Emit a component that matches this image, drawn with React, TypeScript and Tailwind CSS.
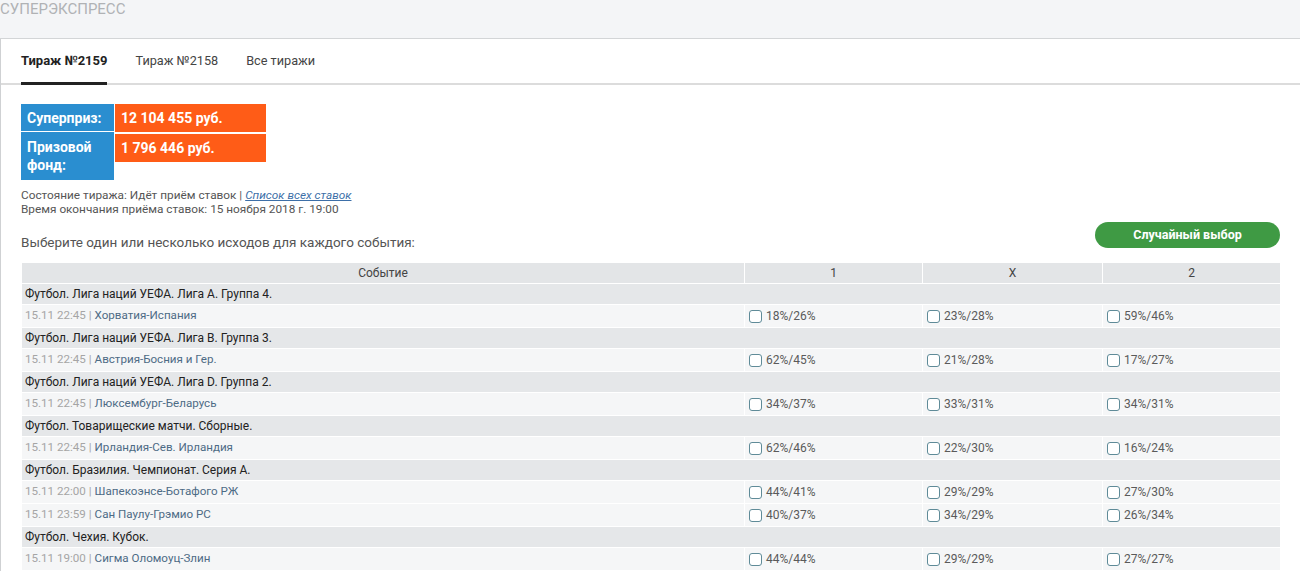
import React from "react";

type Event = { time: string; name: string; odds: [string, string, string] };
type Group = { title: string; events: Event[] };

const groups: Group[] = [
  {
    title: "Футбол. Лига наций УЕФА. Лига А. Группа 4.",
    events: [{ time: "15.11 22:45", name: "Хорватия-Испания", odds: ["18%/26%", "23%/28%", "59%/46%"] }],
  },
  {
    title: "Футбол. Лига наций УЕФА. Лига B. Группа 3.",
    events: [{ time: "15.11 22:45", name: "Австрия-Босния и Гер.", odds: ["62%/45%", "21%/28%", "17%/27%"] }],
  },
  {
    title: "Футбол. Лига наций УЕФА. Лига D. Группа 2.",
    events: [{ time: "15.11 22:45", name: "Люксембург-Беларусь", odds: ["34%/37%", "33%/31%", "34%/31%"] }],
  },
  {
    title: "Футбол. Товарищеские матчи. Сборные.",
    events: [{ time: "15.11 22:45", name: "Ирландия-Сев. Ирландия", odds: ["62%/46%", "22%/30%", "16%/24%"] }],
  },
  {
    title: "Футбол. Бразилия. Чемпионат. Серия А.",
    events: [
      { time: "15.11 22:00", name: "Шапекоэнсе-Ботафого РЖ", odds: ["44%/41%", "29%/29%", "27%/30%"] },
      { time: "15.11 23:59", name: "Сан Паулу-Грэмио РС", odds: ["40%/37%", "34%/29%", "26%/34%"] },
    ],
  },
  {
    title: "Футбол. Чехия. Кубок.",
    events: [{ time: "15.11 19:00", name: "Сигма Оломоуц-Злин", odds: ["44%/44%", "29%/29%", "27%/27%"] }],
  },
];

const cols = "grid grid-cols-[722px_178px_180px_1fr]";

function OddCell({ value }: { value: string }) {
  return (
    <div className="flex items-center gap-[4px] border-l border-white pl-[4px]">
      <span className="h-[13px] w-[13px] rounded-[3px] border border-[#5f8b98] bg-white" />
      <span className="text-[12px] text-[#5a5a5a]">{value}</span>
    </div>
  );
}

export default function App() {
  return (
    <div className="min-h-[576px] bg-white font-['Roboto','Liberation_Sans',sans-serif]">
      <div className="h-[39px] border-b border-[#d3d5d7] bg-[#f4f5f7]">
        <div className="pt-[1px] text-[15px] leading-[17px] text-[#b0b2b5]">СУПЕРЭКСПРЕСС</div>
      </div>

      <div className="border-l border-[#cfd1d3]">
        <div className="flex h-[46px] items-stretch gap-[28px] border-b-2 border-[#dcdcdc] px-5">
          <div className="-mb-[2px] flex items-center border-b-[3px] border-[#222] text-[13px] font-bold text-[#222]">
            Тираж №2159
          </div>
          <div className="flex items-center text-[12.7px] text-[#444]">Тираж №2158</div>
          <div className="flex items-center text-[12.7px] text-[#444]">Все тиражи</div>
        </div>

        <div className="px-5 pt-[19px]">
          <div className="flex w-[245px] text-[14px] font-bold leading-[18px] text-white">
            <div className="w-[93px] shrink-0">
              <div className="flex h-[28px] items-center border-b border-white bg-[#2a8ed0] px-[6px]">Суперприз:</div>
              <div className="h-[48px] bg-[#2a8ed0] px-[6px] pt-[6px]">
                Призовой
                <br />
                фонд:
              </div>
            </div>
            <div className="flex-1 border-l border-white">
              <div className="flex h-[28px] items-center bg-[#ff5c17] px-[6px]">12 104 455 руб.</div>
              <div className="mt-[2px] flex h-[28px] items-center bg-[#ff5c17] px-[6px]">1 796 446 руб.</div>
            </div>
          </div>

          <div className="mt-[8px] text-[11.8px] leading-[14px] text-[#555]">
            <div>
              Состояние тиража: Идёт приём ставок |{" "}
              <a className="italic text-[#3d6fa8] underline">Список всех ставок</a>
            </div>
            <div>Время окончания приёма ставок: 15 ноября 2018 г. 19:00</div>
          </div>

          <div className="mt-[6px] flex items-start justify-between">
            <div className="pt-[10px] text-[13.5px] leading-[20px] text-[#555]">
              Выберите один или несколько исходов для каждого события:
            </div>
            <button className="h-[26px] w-[185px] rounded-full bg-[#3f9a44] text-[12.5px] font-bold text-white">
              Случайный выбор
            </button>
          </div>

          <div className="mt-[11px] ml-[1px] text-[12px]">
            <div className={`${cols} h-[21px] border-b border-white bg-[#e3e5e7] text-[12px] text-[#444]`}>
              <div className="flex items-center justify-center">Событие</div>
              <div className="flex items-center justify-center border-l border-white">1</div>
              <div className="flex items-center justify-center border-l border-white">X</div>
              <div className="flex items-center justify-center border-l border-white">2</div>
            </div>
            {groups.map((g) => (
              <div key={g.title}>
                <div className="flex h-[21px] items-center border-b border-white bg-[#e5e7e9] pl-[3px] text-[#222]">
                  {g.title}
                </div>
                {g.events.map((e) => (
                  <div key={e.name} className={`${cols} h-[23px] border-b border-white bg-[#f5f6f7]`}>
                    <div className="flex items-center pl-[3px] text-[11.6px]">
                      <span className="text-[#a5a5a5]">{e.time} | </span>
                      <span className="ml-[3px] text-[#4d6b85]">{e.name}</span>
                    </div>
                    {e.odds.map((o, i) => (
                      <OddCell key={i} value={o} />
                    ))}
                  </div>
                ))}
              </div>
            ))}
          </div>
        </div>
      </div>
    </div>
  );
}
